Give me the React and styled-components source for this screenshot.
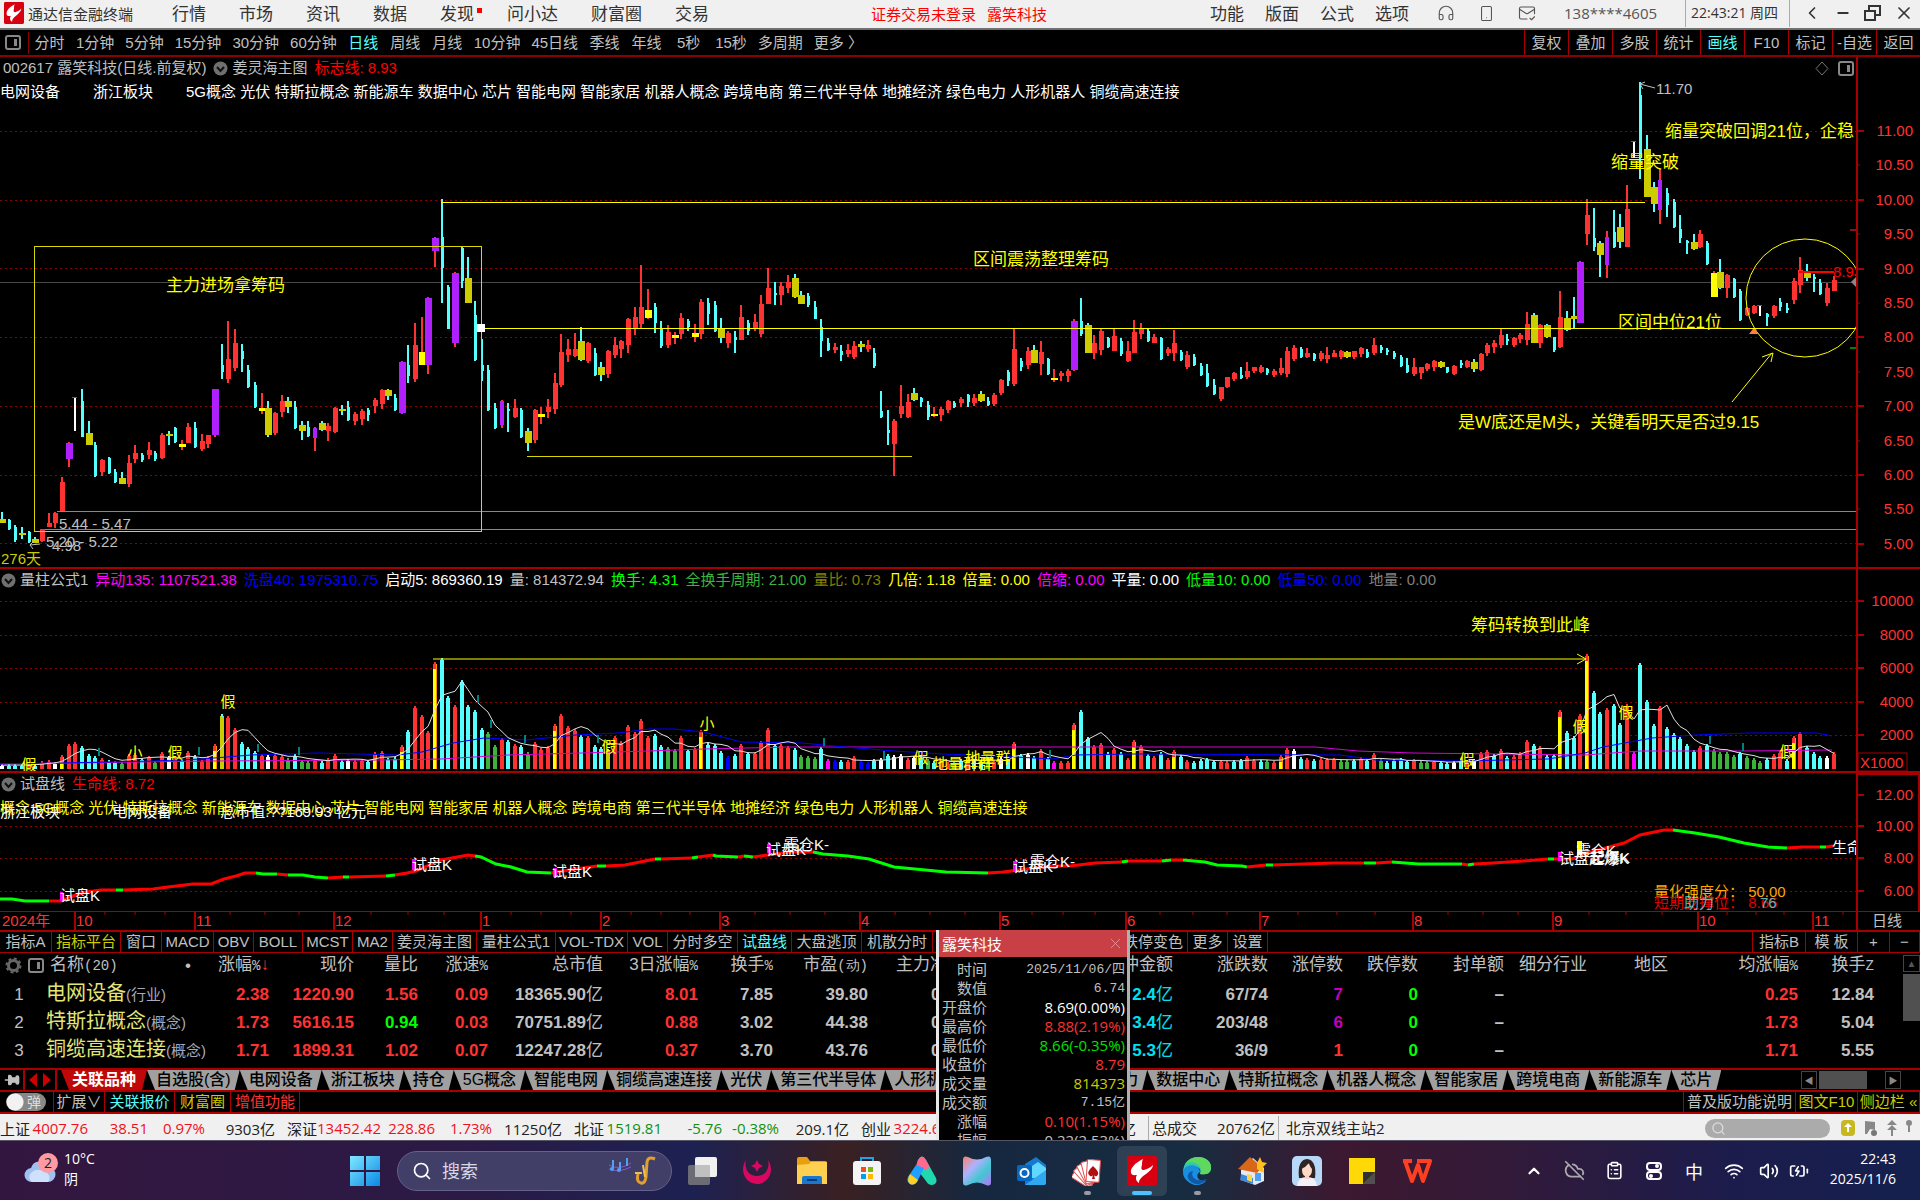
import React from 'react';
import styled, { createGlobalStyle } from 'styled-components';
import {
  Headphones,
  Smartphone,
  MailCheck,
  ChevronLeft,
  ChevronUp,
  Minus,
  X,
  CloudOff,
  ClipboardList,
  Wifi,
  Volume2,
  BatteryCharging,
  Search,
  Pin
} from 'lucide-react';

const RED = '#ff3232';
const LINE = '#a80000';
const CYAN = '#54ffff';
const YELLOW = '#ffff00';
const OLIVE = '#cccc00';
const PURPLE = '#b020ff';
const GREY = '#c0c0c0';
const GREEN = '#00ff00';
const MAGENTA = '#ff00ff';

const Global = createGlobalStyle`
  * { box-sizing: border-box; }
  body {
    margin: 0;
    background: #000;
    color: ${GREY};
    font-family: 'Liberation Sans', 'Noto Sans CJK SC', sans-serif;
    font-size: 15px;
    overflow-x: hidden;
  }
  button, input, table { font: inherit; color: inherit; }
  button { background: none; border: 0; padding: 0; margin: 0; white-space: nowrap; cursor: pointer; }
`;

const Page = styled.div`
  position: relative;
  display: flex;
  flex-direction: column;
`;

/* ---------- title bar ---------- */

const TitleBar = styled.header`
  display: flex;
  align-items: center;
  height: 30px;
  padding-bottom: 2px;
  background: #f0f0f0;
  color: #333;
  border-bottom: 2px solid #707070;
`;

const Brand = styled.div`
  display: flex;
  align-items: center;
  gap: 4px;
  width: 172px;
  padding-left: 4px;
`;

const Menu = styled.nav`
  display: flex;
  gap: ${p => p.$gap}px;
  padding-top: 4px;
  font-size: 17px;
`;

const MenuButton = styled.button`
  position: relative;
  line-height: 22px;
  ${p => p.$dot && `
    &:after {
      content: '';
      position: absolute;
      right: -8px;
      top: 4px;
      width: 5px;
      height: 5px;
      background: #f00;
    }
  `}
`;

const LoginState = styled.div`
  display: flex;
  gap: 11px;
  margin-left: 162px;
  color: #f00;
`;

const TitleRight = styled.div`
  display: flex;
  align-items: center;
  margin-left: auto;
`;

const TitleIcons = styled.div`
  display: flex;
  align-items: center;
  gap: 23px;
  margin: 0 28px;
  color: #555;
`;

const Phone = styled.span`
  width: 121px;
  font-family: 'Open Sans', sans-serif;
  color: #555;
`;

const Clock = styled.span`
  height: 28px;
  line-height: 28px;
  width: 105px;
  padding-left: 5px;
  white-space: nowrap;
  font-family: 'Open Sans', 'Noto Sans CJK SC', sans-serif;
  font-size: 14px;
  border-left: 1px solid #aaa;
  border-right: 1px solid #aaa;
`;

const WindowButtons = styled.div`
  display: flex;
  align-items: center;
  gap: 13px;
  padding: 0 6px 0 12px;
  button { display: flex; }
`;

/* ---------- period toolbar ---------- */

const PeriodBar = styled.nav`
  display: flex;
  align-items: center;
  height: 27px;
  border-bottom: 2px solid #8b0000;
`;

const PanelToggle = styled.button`
  display: flex;
  align-items: center;
  height: 22px;
  width: 29px;
  padding-left: 5px;
  border-right: 1px solid #8b0000;
`;

const Periods = styled.div`
  display: flex;
  gap: 11px;
  padding-left: 5px;
`;

const Period = styled.button`
  min-width: 31px;
  line-height: 22px;
  color: ${p => (p.$on ? CYAN : GREY)};
`;

const Tools = styled.div`
  display: flex;
  margin-left: auto;
`;

const Tool = styled.button`
  width: 44px;
  line-height: 25px;
  border-left: 1px solid ${LINE};
  color: ${p => (p.$on ? CYAN : GREY)};
`;

/* ---------- charts ---------- */

const ChartPanel = styled.section`
  position: relative;
  height: ${p => p.$h}px;
  overflow: hidden;
  svg.plot { display: block; width: 100%; height: 100%; }
`;

const Legend = styled.div`
  position: absolute;
  left: 0;
  top: 0;
  display: flex;
  align-items: center;
  gap: 7px;
  padding-left: ${p => p.$left || 0}px;
  line-height: 22px;
  white-space: nowrap;
`;

const LegendRow = styled(Legend)`
  top: ${p => p.$top}px;
  gap: 33px;
  color: ${p => p.$c};
`;

const LegendTitle = styled.span`
  display: flex;
  align-items: center;
  gap: 4px;
`;

const Value = styled.span`
  color: ${p => p.$c || GREY};
`;

const CornerIcons = styled.div`
  position: absolute;
  right: 66px;
  top: 4px;
  display: flex;
  gap: 9px;
`;

/* ---------- indicator tabs ---------- */

const TabRow = styled.nav`
  display: flex;
  height: 21px;
  border-bottom: 1px solid ${LINE};
`;

const IndicatorTab = styled.button`
  width: ${p => p.$w}px;
  line-height: 20px;
  text-align: ${p => (p.$end ? 'right' : 'center')};
  padding-right: ${p => (p.$end ? 4 : 0)}px;
  border-right: 1px solid ${LINE};
  color: ${p => p.$c || GREY};
  overflow: hidden;
`;

const Push = styled.div`
  margin-left: auto;
  display: flex;
  border-left: 1px solid ${LINE};
`;

/* ---------- quote table ---------- */

const Dock = styled.div`
  position: relative;
`;

const QuoteArea = styled.div`
  display: flex;
  height: 115px;
`;

const Quotes = styled.table`
  flex: 1;
  width: 100%;
  table-layout: fixed;
  border-collapse: collapse;
  height: 111px;
  th, td { padding: 0; white-space: nowrap; text-align: right; }
  th { height: 27px; line-height: 24px; font-size: 17px; font-weight: normal; vertical-align: top; }
  td { height: 28px; font-size: 17px; font-weight: bold; vertical-align: baseline; }
`;

const Half = styled.span`
  font-family: 'Liberation Mono', monospace;
  font-size: 14px;
`;

const NameHead = styled.div`
  display: flex;
  align-items: center;
  gap: 6px;
  padding-left: 5px;
  text-align: left;
  i { margin-left: auto; margin-right: 9px; font-style: normal; }
`;

const NumCell = styled.td`
  color: ${p => p.$c || GREY};
`;

const Unit = styled.span`
  font-weight: normal;
`;

const IndexCell = styled.td`
  && { text-align: center; padding-right: 8px; font-weight: normal; }
`;

const NameCell = styled.td`
  && { text-align: left; font-weight: normal; font-size: 20px; line-height: 27px; color: #e2e67a; }
  small { font-size: 15px; color: #a8a8b8; }
`;

const Scroll = styled.div`
  width: 17px;
  padding-top: 2px;
  display: flex;
  flex-direction: column;
  align-items: stretch;
  gap: 2px;
  button {
    height: 17px;
    border: 1px solid #444;
    color: #555;
    font-size: 10px;
  }
  div { height: 47px; background: #505050; }
`;

/* ---------- sheet tabs ---------- */

const Sheets = styled.nav`
  display: flex;
  align-items: center;
  height: 24px;
  border-top: 2px solid ${LINE};
  border-bottom: 2px solid ${LINE};
`;

const SheetTools = styled.div`
  display: flex;
  align-items: center;
  justify-content: center;
  gap: 5px;
  height: 20px;
  width: ${p => p.$w}px;
  border-right: 2px solid ${LINE};
`;

const SheetList = styled.div`
  display: flex;
  padding-left: 4px;
`;

const SheetTab = styled.button`
  flex: none;
  height: 20px;
  padding: 0 ${p => (p.$on ? 11 : 9)}px;
  line-height: 20px;
  font-size: 16px;
  font-weight: ${p => (p.$on ? 'bold' : '500')};
  background: ${p => (p.$on ? '#c00808' : '#a0a0a0')};
  color: ${p => (p.$on ? '#fff' : '#000')};
  clip-path: polygon(0 0, 100% 0, calc(100% - 5px) 100%, 8px 100%);
`;

const SheetScroll = styled.div`
  display: flex;
  align-items: center;
  gap: 2px;
  margin-left: auto;
  padding-right: 19px;
  button { width: 16px; height: 18px; border: 1px solid #444; font-size: 9px; color: #888; }
  i { width: 48px; height: 18px; background: #505050; margin-right: 16px; }
`;

/* ---------- function bar ---------- */

const FunctionBar = styled.nav`
  display: flex;
  height: 22px;
  border-bottom: 2px solid #b00000;
`;

const Func = styled.button`
  width: ${p => p.$w}px;
  line-height: 20px;
  border-right: 1px solid ${LINE};
  border-left: ${p => (p.$first ? `1px solid ${LINE}` : 0)};
  color: ${p => p.$c || GREY};
`;

const PopSwitch = styled.button`
  display: flex;
  align-items: center;
  justify-content: flex-end;
  width: 40px;
  height: 18px;
  margin: 1px 7px 0 6px;
  padding: 0 5px 0 0;
  border-radius: 9px;
  background: radial-gradient(circle at 9px 9px, #f2f2f2 8px, #888 9px);
  color: #ddd;
  font-size: 14px;
  line-height: 16px;
`;

/* ---------- status bar ---------- */

const StatusBar = styled.footer`
  display: flex;
  align-items: center;
  height: 26px;
  padding-top: 2px;
  background: #f0f0f0;
  color: #222;
  font-family: 'Open Sans', 'Noto Sans CJK SC', sans-serif;
  white-space: nowrap;
  overflow: hidden;
`;

const Market = styled.div`
  display: grid;
  grid-template-columns: 30px 58px 60px 57px 70px;
  width: 287px;
  flex: none;
  color: ${p => p.$c};
  span { text-align: right; }
  span:first-child { text-align: left; color: #222; }
  span:last-child { color: #222; }
`;

const StatusCell = styled.div`
  line-height: 24px;
  padding: 0 3px 0 3px;
  width: ${p => p.$w}px;
  border-left: 1px solid #aaa;
  display: flex;
  justify-content: space-between;
`;

const StatusSearch = styled.label`
  display: flex;
  align-items: center;
  margin-left: auto;
  width: 125px;
  height: 19px;
  padding-left: 6px;
  border-radius: 10px;
  background: #ababab;
  color: #ddd;
  input { width: 90px; border: 0; background: none; outline: 0; }
`;

const StatusIcons = styled.div`
  display: flex;
  align-items: center;
  width: 90px;
  padding-left: 10px;
`;

/* ---------- floating quote window ---------- */

const Float = styled.aside`
  position: absolute;
  left: 936px;
  top: -2px;
  bottom: 0;
  width: 194px;
  overflow: hidden;
  background: #000;
  border-left: 3px solid #e8e8e8;
  border-right: 3px solid #b0b0b0;
`;

const FloatTitle = styled.div`
  display: flex;
  align-items: center;
  justify-content: space-between;
  height: 27px;
  margin: 0 -3px;
  padding: 0 6px 0 6px;
  background: #c84046;
  color: #fff;
  button { display: flex; color: #eaa; }
`;

const FloatList = styled.dl`
  margin: 3px 0 0;
`;

const FloatRow = styled.div`
  display: flex;
  justify-content: space-between;
  height: 19px;
  line-height: 19px;
  padding: 0 2px 0 3px;
  dt { width: 45px; text-align: right; }
  dd {
    margin: 0;
    color: ${p => p.$c || GREY};
    font-family: ${p => (p.$mono ? "'Liberation Mono'" : "'Open Sans'")}, 'Noto Sans CJK SC', sans-serif;
    font-size: ${p => (p.$mono ? 13 : 15)}px;
  }
`;

/* ---------- taskbar ---------- */

const Taskbar = styled.footer`
  display: grid;
  grid-template-columns: 350px auto 1fr;
  align-items: center;
  height: 60px;
  border-top: 1px solid #556;
  background: linear-gradient(90deg, #33163f 0%, #2b1a45 24%, #1d2152 36%, #3a2022 44%, #152840 51%, #182c40 62%, #3d1830 70%, #331a38 78%, #1c1c4c 90%, #14204e 100%);
  color: #fff;
  font-family: 'Open Sans', 'Noto Sans CJK SC', sans-serif;
`;

const Weather = styled.button`
  display: flex;
  align-items: center;
  gap: 5px;
  padding-left: 24px;
  padding-bottom: 4px;
  text-align: left;
  font-size: 14px;
  line-height: 20px;
`;

const Apps = styled.div`
  display: flex;
  align-items: center;
  gap: 5px;
`;

const TaskSearch = styled.label`
  display: flex;
  align-items: center;
  width: 275px;
  height: 40px;
  margin: 0 0 0 12px;
  padding: 0 14px;
  border-radius: 20px;
  border: 1px solid #66608a;
  background: #413f68;
  input {
    flex: 1;
    min-width: 0;
    margin-left: 8px;
    border: 0;
    outline: 0;
    background: none;
    font-size: 18px;
  }
  input::placeholder { color: #d8d8e4; opacity: 1; }
`;

const AppButton = styled.button`
  position: relative;
  display: flex;
  align-items: center;
  justify-content: center;
  width: 50px;
  height: 50px;
  border-radius: 6px;
  background: ${p => (p.$mark === 'on' ? 'rgba(255,255,255,0.1)' : 'none')};
  ${p => p.$mark && `
    &:after {
      content: '';
      position: absolute;
      bottom: 1px;
      width: ${p.$mark === 'on' ? 20 : 7}px;
      height: 4px;
      border-radius: 2px;
      background: ${p.$mark === 'on' ? '#4cc2ff' : '#9a9aa4'};
    }
  `}
`;

const StartButton = styled.button`
  display: flex;
`;

const Tray = styled.div`
  display: flex;
  align-items: center;
  justify-content: flex-end;
  padding-right: 24px;
  button { display: flex; justify-content: center; width: 40px; font-size: 18px; }
  button.tight { width: 30px; }
`;

const TrayClock = styled.div`
  width: 82px;
  padding-bottom: 3px;
  text-align: right;
  font-size: 14px;
  line-height: 20px;
`;

/* ---------- data ---------- */

const STEP = 6.66;
const xOf = i => Math.round(2 + STEP * i);

// kind high low open/close, in thirds of a pixel under each base
const CANDLES = [
  {
    base: 180,
    rows: `o 996 1030 1018 1028|c 1018 1050 1020 1048|c 1036 1085 1040 1080|o 1040 1076 1058 1062|c 1054 1088 1056 1086|o 1072 1090 1078 1090|r 1046 1086 1046 1084|r 1000 1040 1030 1040|r 996 1044 998 1030|r 890 992 906 992|p 786 860 788 836|w 652 754 652 754|c 628 770 662 770|o 722 796 760 796|c 786 890 796 888|r 838 888 840 876|c 830 882 834 880|c 868 908 876 906|o 876 912 894 912|r 824 920 850 912|r 794 848 820 838|c 820 846 824 840|r 786 838 810 826|c 814 842 818 838|r 760 836 766 834|o 752 796 762 768|c 740 790 745 785|y 780 810 792 800|r 730 790 742 788|c 726 804 745 800|r 762 812 782 808|r 764 804 764 792|p 626 772 628 766|c 492 598 555 575|r 422 608 538 598|r 448 574 488 564|c 492 576 514 536|c 556 624 570 620|c 606 684 615 682|y 640 702 684 694|o 662 770 684 766|r 696 764 698 760|r 644 712 662 696|o 650 700 662 682|c 664 748 680 744|o 722 780 734 754|c 724 770 740 768|q 740 812 744 774|o 722 752 730 750|r 730 782 738 752|r 680 760 684 756|o 674 706 686 692|c 664 722 680 720|r 696 736 702 724|r 688 734 692 718|c 684 722 690 706|r 654 698 660 678|r 628 686 630 672|o 628 660 630 648|c 642 692 655 690|p 542 702 546 700|c 496 608 555 588|r 430 606 496 598|y 410 556 516 554|p 350 582 354 554|p 170 260 174 214|c 58 370 170 265|c 316 448 322 446|p 276 500 280 488|c 198 324 205 302|o 230 368 294 368|c 364 542 405 540|c 476 602 556 572|c 556 692 570 690|c 670 748 685 745|q 660 744 664 736|c 670 756 688 694|r 656 714 684 712|c 684 774 690 772|o 744 812 754 788|r 688 790 690 780|y 680 732 702 712|r 658 714 680 696|r 578 702 610 688|r 462 620 516 616|r 476 546 508 526|r 458 530 508 528|o 440 542 482 540|r 486 550 488 542|c 504 588 520 585|o 546 602 560 584|r 510 594 514 582|r 470 534 496 524|r 480 534 482 506|r 414 518 416 494`
  },
  {
    base: 240,
    rows: `r 200 284 230 266|r 76 266 200 252|y 148 238 210 234|c 188 280 200 250|c 244 324 265 318|r 256 324 276 316|y 275 312 285 293|r 220 298 234 282|c 236 274 242 262|y 252 306 280 290|r 178 298 186 282|c 174 254 190 222|c 184 276 195 272|o 234 308 266 294|r 272 324 278 308|c 272 340 290 300|r 196 300 230 300|c 240 284 248 274|r 222 274 246 268|r 166 290 192 282|r 84 192 144 192|c 126 196 158 164|r 126 196 138 164|r 106 160 126 144|o 102 174 114 172|o 154 192 166 192|c 158 200 168 196|c 184 238 202 236|c 238 350 262 302|c 294 334 308 330|r 308 340 320 330|c 314 362 334 344|r 312 350 330 342|r 304 358 318 350|o 304 336 312 322|r 300 336 316 328|c 324 384 340 378|c 454 534 512 532|c 510 614 570 578|r 536 708 542 612|r 436 534 498 522|r 462 534 486 532|o 444 482 460 480|c 470 500 474 486|c 484 540 496 532|y 500 532 521 526|r 502 542 506 526|r 480 518 484 510|c 484 504 488 500|r 470 500 478 488|c 462 500 466 486|r 462 498 474 488|o 454 486 462 484|c 470 498 484 494|r 458 498 464 492|r 416 466 420 458|c 390 438 396 422|r 266 438 328 432|c 354 392 362 382|r 320 388 332 374|o 316 370 330 368|r 302 404 336 372|c 354 406 358 402|y 388 426 413 418|r 394 424 400 408|r 386 426 394 408|p 236 392 242 390|c 174 288 242 282|o 248 340 254 338|r 286 358 310 338|r 266 344 272 330|c 290 324 294 320|r 266 332 288 332|c 294 348 304 342|r 304 366 332 362|r 240 340 276 338`
  },
  {
    base: 260,
    rows: `r 188 238 206 222|c 206 246 212 244|r 222 250 230 248|c 230 300 234 296|r 260 288 266 280|r 210 302 250 280|c 270 302 276 300|r 274 328 284 320|c 282 318 290 314|c 308 348 318 344|c 312 382 340 378|c 356 404 376 402|r 380 424 382 416|r 350 384 352 382|r 336 364 340 356|c 320 358 345 354|r 306 358 334 352|r 320 340 322 334|r 316 340 320 336|c 324 344 326 338|r 328 350 332 346|r 294 346 324 338|r 260 350 272 342|r 256 304 264 296|c 260 294 268 290|r 264 294 280 292|c 278 302 282 296|r 272 302 280 296|r 260 308 286 296|r 270 290 280 290|r 270 298 274 290|o 272 294 276 290|r 272 298 274 292|r 260 290 264 282|c 268 294 276 290|r 234 284 254 280|c 256 280 260 270|c 264 284 270 276|c 274 298 280 290|c 286 320 290 318|c 294 340 315 336|r 294 348 322 342|r 320 358 322 338|r 308 332 312 328|r 300 332 304 322|o 302 324 306 322|c 320 340 322 336|r 316 344 318 342|c 300 324 310 316|r 300 324 304 320|o 296 336 306 328|r 280 332 282 330|r 248 288 254 280|r 240 280 248 262|r 206 264 226 256|c 222 256 236 242|r 230 262 234 256|r 218 250 226 238|r 156 256 192 240|o 158 250 164 248|r 192 264 194 248|o 192 234 194 230|c 230 276 232 270|r 94 264 170 260|o 154 212 174 210|o 110 206 168 178|p 2 190 6 188`
  },
  {
    base: 70,
    rows: `r 388 524 436 492|c 414 544 504 532|o 514 620 518 556|q 484 624 500 584|c 420 534 486 532|o 432 534 470 516|r 346 530 418 530|w 214 264 214 264|c 36 328 76 260|o 196 380 238 380|o 336 426 350 402|q 296 462 330 420|c 354 440 370 404|c 388 474 396 470|c 436 518 478 504|c 510 552 514 520|o 492 540 516 538|r 480 534 492 532|c 514 586 520 582|y 602 680 608 680|o 568 658 606 654|r 612 684 616 654|c 624 684 628 680|c 656 752 664 750|r 710 738 714 734|r 706 732 708 730|w 706 738 716 730|c 728 768 732 740|r 706 744 708 738|c 684 722 696 710|c 698 728 714 720|r 624 702 632 690|r 560 668 600 646|o 582 632 604 624|c 612 666 620 628|c 628 676 640 672|r 638 708 654 700|r 618 664 630 662`
  }
].flatMap(({ base, rows }) =>
  rows.split('|').map(row => {
    const [kind, ...n] = row.split(' ');
    const [hi, lo, top, bot] = n.map(v => Math.round(base + v / 3));
    return { kind, hi, lo, top, bot };
  })
);

const VOLUMES = `w616 c614 c616 c615 y612 c614 r606 r604 w608 y588 r556 r548 c562 c584 c592 r596 c602 c606 g608 r584 r582 c596 r592 g606 r578 w590 r598 c600 r576 c588 r604 r590 y556 o464 r472 r506 c548 c564 c576 r586 w588 r586 r588 g596 c586 g602 g606 r600 c606 r596 r586 c602 w600 r602 r600 c604 y578 r576 c598 c594 y558 c512 r442 r468 r516 y308 c298 c410 r438 c362 c438 c454 c508 g520 g558 r536 c542 r556 c558 g580 r550 r566 r562 y495 r464 r502 r510 c528 r530 c558 c565 o570 r530 r545 r498 r520 r480 r530 c524 c558 g564 g570 r532 c570 r568 y514 c552 c556 c576 b592 c586 r556 c580 r580 r546 r506 c556 r556 r562 c568 g588 g592 g594 c564 m600 b604 c602 r602 r592 b604 b608 c600 w598 c584 w588 w584 r596 w590 c592 g600 c606 r604 r608 g606 c600 r590 c600 c606 g604 r602 w594 c600 y548 c584 w582 c590 r570 c594 m606 r606 r606 y492 c452 c534 r558 r552 c580 r568 c580 r596 y542 r558 c584 r592 c578 r596 y572 c588 r602 c606 c600 c598 c602 r604 r606 c602 c600 r592 r600 c602 g604 r606 y588 r568 w570 c594 r598 c600 r598 r598 r596 g602 g602 c600 r594 c600 r582 g600 c606 c600 c598 c602 r600 g606 g606 r604 c606 c610 w606 c600 y606 w600 r580 r572 c584 r570 c592 r588 r580 r542 c556 r562 c588 c584 y454 c516 c530 r466 y284 c396 c458 r446 c434 c492 r434 m578 c312 c422 c496 r442 c504 c522 c534 c556 c572 r562 c556 g570 g580 g578 g588 c580 g592 g596 g606 c598 r584 r576 c600 y532 r520 c562 c580 c590 w590 r580`
  .split(' ')
  .map(v => ({ kind: v[0], y: 560 + Number(v.slice(1)) / 3 }));

const VOL_BASE = 769;
const VOL_COLORS = {
  r: RED,
  c: CYAN,
  w: '#fff',
  g: '#3cb43c',
  y: YELLOW,
  o: OLIVE,
  b: '#0000ff',
  m: MAGENTA
};

const ma5 = VOLUMES.map((v, i) => {
  const win = VOLUMES.slice(Math.max(0, i - 4), i + 1);
  const avg = win.reduce((s, w) => s + w.y, 0) / win.length;
  return `${xOf(i)},${avg.toFixed(1)}`;
}).join(' ');

const MA40 =
  '0,764 61,763 153,761 202,759 251,755 318,753 398,755 422,752 453,743 484,738 527,740 576,735 618,733 649,729 674,729 704,732 741,742 802,743 845,747 894,751 943,754 997,756 1052,759 1076,755 1131,754 1340,755 1376,760 1462,761 1548,759 1585,753 1603,747 1652,738 1695,735 1750,733 1817,733 1832,736';
const MA135 =
  '0,764 208,761 380,760 441,759 508,755 582,753 649,751 704,749 790,747 1315,747 1358,751 1413,753 1585,755 1640,751 1744,751 1832,750';

const TURNS = [
  [99, 748], [199, 747], [258, 744], [299, 747], [478, 695], [491, 720], [525, 735],
  [598, 735], [824, 738], [884, 751], [1050, 750], [1710, 736], [1743, 743]
];

const LIFE = [
  ['g', '0,899 12,899 25,901 49,901'],
  ['r', '49,901 61,901 70,897 86,892 101,890 116,890'],
  ['g', '116,890 123,890'],
  ['r', '123,890 153,889 168,887 193,884 211,884 224,879 236,876 245,873 256,873'],
  ['g', '256,873 263,874 277,874'],
  ['r', '277,874 288,875'],
  ['g', '288,875 303,875 315,877 328,878'],
  ['r', '328,878 343,877'],
  ['g', '343,877 349,877'],
  ['r', '349,877 386,876'],
  ['g', '386,876 395,875'],
  ['r', '395,875 407,873 416,871 429,865 441,860 468,855 475,856'],
  ['g', '475,856 481,857 496,864 511,867 527,872 551,873'],
  ['r', '551,873 569,870 597,866'],
  ['g', '597,866 606,866'],
  ['r', '606,866 625,865 655,859'],
  ['g', '655,859 661,859'],
  ['r', '661,859 692,858'],
  ['g', '692,858 698,857'],
  ['r', '698,857 713,855'],
  ['g', '713,855 716,856 738,857'],
  ['r', '738,857 744,856'],
  ['g', '744,856 753,857'],
  ['r', '753,857 768,855 790,852 813,852'],
  ['g', '813,852 823,854 848,856 869,859 894,867 915,869 946,872 988,873'],
  ['r', '988,873 1003,872 1027,869 1052,866 1070,866 1095,863 1122,862'],
  ['g', '1122,862 1128,861'],
  ['r', '1128,861 1162,861'],
  ['g', '1162,861 1171,860'],
  ['r', '1171,860 1183,860'],
  ['g', '1183,860 1205,862 1217,865 1242,866 1247,867'],
  ['r', '1247,867 1266,865'],
  ['g', '1266,865 1273,865'],
  ['r', '1273,865 1333,863 1364,863'],
  ['g', '1364,863 1376,863'],
  ['r', '1376,863 1392,862'],
  ['g', '1392,862 1419,864 1462,864'],
  ['r', '1462,864 1468,865'],
  ['g', '1468,865 1474,864'],
  ['r', '1474,864 1493,863 1523,861 1548,859'],
  ['g', '1548,859 1554,859'],
  ['r', '1554,859 1572,859 1591,852 1624,843 1640,835 1664,830 1673,830'],
  ['g', '1673,830 1695,833 1719,837 1744,843 1768,847 1787,848'],
  ['r', '1787,848 1802,847 1820,847'],
  ['g', '1820,847 1826,847'],
  ['r', '1826,847 1833,846']
];

const MONTHS = [
  ['10', 75], ['11', 195], ['12', 334], ['1', 481], ['2', 601], ['3', 720], ['4', 860],
  ['5', 1000], ['6', 1126], ['7', 1260], ['8', 1413], ['9', 1553], ['10', 1698], ['11', 1813]
];

const CONCEPTS =
  '5G概念 光伏 特斯拉概念 新能源车 数据中心 芯片 智能电网 智能家居 机器人概念 跨境电商 第三代半导体 地摊经济 绿色电力 人形机器人 铜缆高速连接';

const PERIODS = ['分时', '1分钟', '5分钟', '15分钟', '30分钟', '60分钟', '日线', '周线', '月线', '10分钟', '45日线', '季线', '年线', '5秒', '15秒', '多周期', '更多 〉'];
const TOOLS = ['复权', '叠加', '多股', '统计', '画线', 'F10', '标记', '-自选', '返回'];

const VOL_LEGEND = [
  ['异动135: 1107521.38', MAGENTA],
  ['洗盘40: 1975310.75', '#0000ff'],
  ['启动5: 869360.19', '#fff'],
  ['量: 814372.94', GREY],
  ['换手: 4.31', GREEN],
  ['全换手周期: 21.00', '#3cb43c'],
  ['量比: 0.73', '#808000'],
  ['几倍: 1.18', YELLOW],
  ['倍量: 0.00', YELLOW],
  ['倍缩: 0.00', MAGENTA],
  ['平量: 0.00', '#fff'],
  ['低量10: 0.00', GREEN],
  ['低量50: 0.00', '#0000ff'],
  ['地量: 0.00', '#808080']
];

const INDICATORS = [
  ['指标A', 52], ['指标平台', 69, OLIVE], ['窗口', 41], ['MACD', 52], ['OBV', 40], ['BOLL', 49],
  ['MCST', 50], ['MA2', 40], ['姜灵海主图', 84], ['量柱公式1', 79], ['VOL-TDX', 72], ['VOL', 40],
  ['分时多空', 70], ['试盘线', 54, CYAN], ['大盘逃顶', 70], ['机散分时', 71]
];

const COLUMNS = [
  ['涨幅', 69, '%'], ['现价', 85], ['量比', 64], ['涨速', 70, '%'], ['总市值', 115], ['3日涨幅', 95, '%'],
  ['换手', 75, '%'], ['市盈', 95, '(动)'], ['主力净额', 96], ['冲金额', 209], ['涨跌数', 95], ['涨停数', 75],
  ['跌停数', 75], ['封单额', 86], ['细分行业', 83], ['地区', 81], ['均涨幅', 130, '%'], ['换手', 76, 'Z']
];

const W = undefined;
const VIOLET = '#c000c0';
const TEAL = '#00e0f0';
const ROWS = [
  ['电网设备', '行业', [['2.38', RED], ['1220.90', RED], ['1.56', RED], ['0.09', RED], ['18365.90', W, '亿'], ['8.01', RED], ['7.85', W], ['39.80', W], ['0.00', W], ['2.4', TEAL, '亿'], ['67/74', W], ['7', VIOLET], ['0', GREEN], ['–', W], [''], [''], ['0.25', RED], ['12.84', W]]],
  ['特斯拉概念', '概念', [['1.73', RED], ['5616.15', RED], ['0.94', GREEN], ['0.03', RED], ['70751.89', W, '亿'], ['0.88', RED], ['3.02', W], ['44.38', W], ['0.00', W], ['3.4', TEAL, '亿'], ['203/48', W], ['6', VIOLET], ['0', GREEN], ['–', W], [''], [''], ['1.73', RED], ['5.04', W]]],
  ['铜缆高速连接', '概念', [['1.71', RED], ['1899.31', RED], ['1.02', RED], ['0.07', RED], ['12247.28', W, '亿'], ['0.37', RED], ['3.70', W], ['43.76', W], ['0.00', W], ['5.3', TEAL, '亿'], ['36/9', W], ['1', RED], ['0', GREEN], ['–', W], [''], [''], ['1.71', RED], ['5.55', W]]]
];

const SHEETS = ['关联品种', '自选股(含)', '电网设备', '浙江板块', '持仓', '5G概念', '智能电网', '铜缆高速连接', '光伏', '第三代半导体', '人形机器人', '地摊经济', '绿色电力', '数据中心', '特斯拉概念', '机器人概念', '智能家居', '跨境电商', '新能源车', '芯片'];

const MARKETS = [
  ['上证', '4007.76', '38.51', '0.97%', '9303亿', '#f01020'],
  ['深证', '13452.42', '228.86', '1.73%', '11250亿', '#f01020'],
  ['北证', '1519.81', '-5.76', '-0.38%', '209.1亿', '#109010'],
  ['创业', '3224.62', '', '', '5233亿', '#f01020']
];

const FLOAT_ROWS = [
  ['时间', '2025/11/06/四', GREY, true],
  ['数值', '6.74', GREY, true],
  ['开盘价', '8.69(0.00%)', '#fff'],
  ['最高价', '8.88(2.19%)', RED],
  ['最低价', '8.66(-0.35%)', '#00e000'],
  ['收盘价', '8.79', RED],
  ['成交量', '814373', OLIVE],
  ['成交额', '7.15亿', GREY, true],
  ['涨幅', '0.10(1.15%)', RED],
  ['振幅', '0.22(2.53%)', GREY]
];

/* ---------- chart pieces ---------- */

const WICK = { r: RED, c: CYAN, p: RED, q: RED, o: CYAN, y: RED, w: '#fff' };
const BODY = { r: RED, c: CYAN, p: PURPLE, q: PURPLE, o: OLIVE, y: YELLOW, w: '#fff' };
const BODY_W = { r: 5, c: 3, p: 7, q: 4, o: 7, y: 7, w: 2 };

const Candle = ({ i, kind, hi, lo, top, bot }) => {
  const x = xOf(i);
  const w = BODY_W[kind];
  const left = kind === 'c' ? x - 1 : x - Math.floor(w / 2);
  return (
    <g>
      <rect x={x - 1} y={hi} width={2} height={Math.max(1, lo - hi)} fill={WICK[kind]} />
      <rect x={left} y={top} width={w} height={Math.max(2, bot - top)} fill={BODY[kind]} />
      {kind === 'w' && <rect x={x - 3} y={hi} width={5} height={1} fill={PURPLE} />}
    </g>
  );
};

const VolumeBar = ({ i, kind, y }) => {
  const x = xOf(i);
  const top = Math.round(y);
  const cap = kind === 'y' ? RED : kind === 'o' ? CYAN : VOL_COLORS[kind];
  return (
    <g>
      <rect x={x - 2} y={top + 1} width={4} height={VOL_BASE - top - 1} fill={VOL_COLORS[kind]} />
      <rect x={x - 1} y={top - 1} width={2} height={3} fill={cap} />
      {kind === 'y' && <rect x={x - 2} y={top + 1} width={4} height={5} fill={RED} />}
      {kind === 'y' && <rect x={x + 1} y={top + 1} width={1} height={VOL_BASE - top - 1} fill="#ff9000" />}
    </g>
  );
};

const Grid = ({ ys }) =>
  ys.map(y => (
    <line key={y} x1={0} x2={1856} y1={y} y2={y} stroke="#8c0000" strokeDasharray="2 3" shapeRendering="crispEdges" />
  ));

const Axis = ({ top, bottom, ticks, at = 1913 }) => (
  <g>
    <line x1={1857} x2={1857} y1={top} y2={bottom} stroke={LINE} strokeWidth={2} />
    {ticks.map(([label, y, minor]) => (
      <g key={label}>
        <line x1={1857} x2={minor ? 1860 : 1864} y1={y} y2={y} stroke={LINE} strokeWidth={minor ? 1 : 2} />
        <text x={at} y={y + 5} textAnchor="end" fill={RED}>{label}</text>
      </g>
    ))}
  </g>
);

const priceTicks = Array.from({ length: 13 }, (_, k) => {
  const p = 11 - k * 0.5;
  return [p.toFixed(2), Math.round(131 + 34.4 * k), k % 2 === 1];
});

const PriceChart = () => (
  <svg className="plot" viewBox="0 57 1920 512" preserveAspectRatio="xMaxYMid slice" fontSize="15">
    <defs>
      <clipPath id="price"><rect x="0" y="57" width="1856" height="512" /></clipPath>
    </defs>
    <Grid ys={[131, 200, 268, 337, 406, 475, 543]} />
    <g clipPath="url(#price)">
      <g stroke="#606060" shapeRendering="crispEdges">
        <line x1="0" x2="1856" y1="282" y2="282" stroke="#484848" />
        <line x1="57" x2="1856" y1="511" y2="511" stroke="#888" />
        <line x1="44" x2="1856" y1="529" y2="529" stroke="#888" />
      </g>
      <g shapeRendering="crispEdges">
        {CANDLES.map((c, i) => <Candle key={i} i={i} {...c} />)}
      </g>
      <g fill="none" stroke={YELLOW}>
        <rect x="34" y="246" width="447" height="285" stroke="#d8d800" shapeRendering="crispEdges" />
        <path d="M441 202H1645M481 328H1856" shapeRendering="crispEdges" />
        <path d="M527 456H912" stroke="#d8d800" shapeRendering="crispEdges" />
        <circle cx="1805" cy="298" r="59" />
        <path d="M1732 402L1772 353M1762 357L1773 353L1771 362" />
      </g>
      <rect x="477" y="324" width="8" height="8" fill="#fff" />
      <path d="M1749 334L1753 329H1756L1758 334Z" fill="#ff8040" />
      <path d="M1799 272H1834" stroke="#f00" strokeWidth="2" />
      <text x="1833" y="277" fill="#f00">8.93</text>
      <path d="M1856 277V287L1851 282Z" fill="#888" />
      <path d="M1850 230H1856" stroke={RED} />
      <path d="M1850 348H1856" stroke={GREEN} />
      <path d="M1640 84L1655 88M1640 84L1645 82M1640 84L1643 89" stroke={GREY} fill="none" />
      <path d="M30 545L40 544M30 545L34 541M30 545L33 549" stroke={GREY} fill="none" />
      <g fill={GREY}>
        <text x="1656" y="94">11.70</text>
        <text x="59" y="529">5.44 - 5.47</text>
        <text x="46" y="547">5.20 - 5.22</text>
        <text x="52" y="551">4.98</text>
      </g>
      <g fill={YELLOW} fontSize="17">
        <text x="166" y="291">主力进场拿筹码</text>
        <text x="973" y="265">区间震荡整理筹码</text>
        <text x="1665" y="137">缩量突破回调21位，企稳</text>
        <text x="1611" y="168">缩量突破</text>
        <text x="1618" y="328">区间中位21位</text>
        <text x="1458" y="428">是W底还是M头，关键看明天是否过9.15</text>
      </g>
      <text x="1" y="564" fill={OLIVE}>276天</text>
    </g>
    <Axis top={57} bottom={569} ticks={priceTicks} />
    <line x1="0" x2="1920" y1="568" y2="568" stroke={LINE} strokeWidth="2" />
  </svg>
);

const VolumeChart = () => (
  <svg className="plot" viewBox="0 569 1920 204" preserveAspectRatio="xMaxYMid slice" fontSize="15">
    <Grid ys={[601, 635, 668, 702, 735]} />
    <g shapeRendering="crispEdges">
      {VOLUMES.map((v, i) => <VolumeBar key={i} i={i} {...v} />)}
    </g>
    <g fill="none">
      <polyline points={MA135} stroke="#d800d8" />
      <polyline points={MA40} stroke="#0000ff" />
      <polyline points={ma5} stroke="#e0e0e0" />
      {TURNS.map(([x, y]) => <path key={x} d={`M${x} ${y}v8`} stroke="#008080" strokeWidth="2" />)}
      <path d="M433 659H1586M1577 654L1586 659L1577 664" stroke={YELLOW} />
    </g>
    <g fill={YELLOW} textAnchor="middle">
      {[[29, 770], [175, 758], [228, 707], [609, 752], [921, 763], [1467, 765], [1580, 732], [1626, 718], [1787, 757]].map(([x, y]) => (
        <text key={x} x={x} y={y}>假</text>
      ))}
      <text x="135" y="758">小</text>
      <text x="707" y="729">小</text>
      <text x="963" y="769">地量群群</text>
      <text x="988" y="763">地量群</text>
    </g>
    <text x="1471" y="631" fill={YELLOW} fontSize="17">筹码转换到此峰</text>
    <Axis top={569} bottom={773} ticks={[['10000', 601], ['8000', 635], ['6000', 668], ['4000', 702], ['2000', 735]]} />
    <rect x="1858" y="753" width="49" height="18" fill="none" stroke={LINE} />
    <text x="1860" y="768" fill={RED}>X1000</text>
    <line x1="0" x2="1920" y1="772" y2="772" stroke={LINE} strokeWidth="2" />
  </svg>
);

const SIGNALS = [
  [60, 901, '试盘K'], [412, 870, '试盘K'], [552, 877, '试盘K'], [766, 855, '试盘K-'], [784, 850, '震仓K-'],
  [1013, 872, '试盘K-'], [1030, 867, '震仓K-'], [1559, 864, '试盘起爆K'], [1576, 856, '震仓K'], [1590, 863, '起爆K']
];

const TrendChart = () => (
  <svg className="plot" viewBox="0 773 1920 138" preserveAspectRatio="xMaxYMid slice" fontSize="15">
    <defs>
      <clipPath id="trend"><rect x="0" y="773" width="1856" height="138" /></clipPath>
    </defs>
    <Grid ys={[826, 858, 891]} />
    <g clipPath="url(#trend)">
      {LIFE.map(([c, pts]) => (
        <polyline key={pts} points={pts} fill="none" stroke={c === 'g' ? GREEN : '#f00'} strokeWidth="3" />
      ))}
      <g fill={MAGENTA}>
        <rect x="60" y="892" width="3" height="9" />
        <rect x="412" y="859" width="4" height="11" />
        <rect x="553" y="868" width="4" height="9" />
        <rect x="767" y="844" width="4" height="9" />
        <rect x="1013" y="861" width="4" height="11" />
        <rect x="1558" y="852" width="4" height="9" />
      </g>
      <rect x="1577" y="841" width="5" height="14" fill={YELLOW} />
      <g fill="#fff">
        {SIGNALS.map(([x, y, t]) => <text key={x} x={x} y={y}>{t}</text>)}
        <text x="1832" y="853">生命线</text>
      </g>
      <text x="1654" y="897" fill="#ffa500">量化强度分： 50.00</text>
      <text x="1654" y="908" fill="#e00000">短期支撑位： 8.65</text>
      <text x="1684" y="908" fill={CYAN} opacity="0.7">助力</text>
      <text x="1760" y="908" fill={CYAN} opacity="0.7">76</text>
    </g>
    <Axis top={773} bottom={911} ticks={[['12.00', 795], ['10.00', 826], ['8.00', 858], ['6.00', 891]]} />
    <path d="M1858 774H1919V911" fill="none" stroke={LINE} strokeWidth="2" />
  </svg>
);

const TimeAxis = () => (
  <svg className="plot" viewBox="0 911 1920 21" preserveAspectRatio="xMaxYMid slice" fontSize="15" fill={RED}>
    <path d="M0 911H1920M0 931H1920" stroke={LINE} strokeWidth="2" />
    <text x="2" y="926">2024年</text>
    {MONTHS.map(([m, x], i) => {
      const next = i < MONTHS.length - 1 ? MONTHS[i + 1][1] : x + 120;
      return (
        <g key={x}>
          <path d={`M${x} 912V930`} stroke={LINE} strokeWidth="2" />
          {[1, 2, 3].map(k => {
            const tx = Math.round(x + ((next - x) * k) / 4);
            return tx < 1856 && <path key={k} d={`M${tx} 912v3`} stroke={LINE} />;
          })}
          <text x={x + 1} y="926">{m}</text>
        </g>
      );
    })}
    <path d="M1857 912V930" stroke={LINE} strokeWidth="2" />
    <text x="1872" y="926" fill={GREY}>日线</text>
  </svg>
);

/* ---------- drawings ---------- */

const Logo = ({ w = 20, h = 22 }) => (
  <svg width={w} height={h} viewBox="0 0 30 30" preserveAspectRatio="none">
    <rect width="30" height="30" rx="2" fill="#d80010" />
    <path d="M16 3C8 7 3 12 4 17c1 3 4 2 6 2-2 3-1 6 2 8 0-4 3-6 7-9 4-3 7-6 7-9-3 3-6 4-9 5-3 0-3-2-2-5 0-2 0-4 1-6z" fill="#fff" />
  </svg>
);

const Sidebar = () => (
  <svg width="16" height="15" viewBox="0 0 16 15" fill="none" stroke="#888">
    <rect x="1" y="1" width="14" height="13" rx="2" strokeWidth="2" />
    <rect x="9" y="4" width="3" height="7" fill="#888" stroke="none" />
  </svg>
);

const Fold = () => (
  <svg width="15" height="15" viewBox="0 0 15 15">
    <circle cx="7.5" cy="7.5" r="7" fill="#707070" />
    <path d="M4 6l3.5 4L11 6" fill="none" stroke="#111" strokeWidth="2" />
  </svg>
);

const Gear = () => (
  <svg width="17" height="17" viewBox="0 0 17 17">
    <circle cx="8.500" cy="8.500" r="5" fill="none" stroke="#666" strokeWidth="3" />
    <circle cx="8.500" cy="8.500" r="7" fill="none" stroke="#666" strokeWidth="2" strokeDasharray="3 2.500" />
  </svg>
);

const Icon30 = ({ children }) => (
  <svg width="30" height="30" viewBox="0 0 30 30">{children}</svg>
);

const WeatherIcon = () => (
  <svg width="35" height="32" viewBox="0 0 35 32">
    <path d="M8 29a7 7 0 0 1-1-14 9 9 0 0 1 17-1 7 7 0 0 1 0 15z" fill="#9fc0f0" />
    <path d="M8 29a6 6 0 0 1 0-10 9 9 0 0 1 12 0 6 6 0 0 1 4 10z" fill="#cfe0fb" />
    <circle cx="24" cy="10" r="10" fill="#ff9aa2" />
    <text x="24" y="15" fontSize="14" textAnchor="middle" fill="#222">2</text>
  </svg>
);

const APPS = [
  ['任务视图', null, (
    <Icon30>
      <rect x="8" y="1" width="22" height="20" rx="2" fill="#f0f0f0" />
      <rect x="1" y="9" width="22" height="20" rx="2" fill="#808080" opacity="0.8" />
      <rect x="8" y="9" width="15" height="12" fill="#c0c0c0" />
    </Icon30>
  )],
  ['通讯', null, (
    <Icon30>
      <path d="M4 4C-3 14 3 28 15 28S33 14 26 4c2 8-2 16-11 16S2 12 4 4z" fill="#d80860" />
      <path d="M15 4l2 4 4 2-4 2-2 4-2-4-4-2 4-2z" fill="#d80860" />
    </Icon30>
  )],
  ['文件资源管理器', null, (
    <Icon30>
      <path d="M0 3a2 2 0 0 1 2-2h8l3 4h15a2 2 0 0 1 2 2v20H0z" fill="#e8a010" />
      <path d="M0 9l12-1 2-2h16v22H0z" fill="#ffd050" />
      <path d="M5 28v-6q0-2 2-2h16q2 0 2 2v6z" fill="#1878d0" />
      <path d="M10 24h10" stroke="#083878" strokeWidth="2" />
    </Icon30>
  )],
  ['应用商店', null, (
    <Icon30>
      <path d="M9 6V2h12v4" fill="none" stroke="#20a0e8" strokeWidth="2" />
      <rect x="1" y="5" width="28" height="24" rx="3" fill="#f4f4f4" />
      <path d="M9 11h5v5H9z" fill="#f05020" /><path d="M16 11h5v5h-5z" fill="#80b810" />
      <path d="M9 18h5v5H9z" fill="#00a0f0" /><path d="M16 18h5v5h-5z" fill="#ffb900" />
    </Icon30>
  )],
  ['助手', null, (
    <Icon30>
      <path d="M11 4q4-7 8 0l10 18q2 6-4 7-4 0-6-4L9 12z" fill="#20d8b0" />
      <path d="M11 4q4-7 8 0l4 8-11 3-3-5z" fill="#ff6890" />
      <path d="M9 9l8 3-7 14q-3 4-7 2-4-2-2-7z" fill="#20a0ff" />
      <path d="M3 18l8 6q-3 6-8 4-4-3 0-10z" fill="#ffd020" />
    </Icon30>
  )],
  ['剪映', null, (
    <Icon30>
      <defs>
        <linearGradient id="bow" x1="0" x2="1" y1="0" y2="1">
          <stop offset="0" stopColor="#ff8060" /><stop offset="0.35" stopColor="#b0b0ff" />
          <stop offset="0.65" stopColor="#40c8d0" /><stop offset="1" stopColor="#c070ff" />
        </linearGradient>
      </defs>
      <path d="M1 4q0-5 5-3 9 5 18 0 5-2 5 3v22q0 5-5 3-9-5-18 0-5 2-5-3z" fill="url(#bow)" />
    </Icon30>
  )],
  ['邮件', null, (
    <Icon30>
      <path d="M8 8L19 1l10 8v18q0 2-3 2H8z" fill="#1878d0" />
      <path d="M12 12l9-6 8 6v10H12z" fill="#60d8ff" />
      <path d="M8 29L29 14v13q0 2-3 2z" fill="#30a8f0" />
      <rect x="0" y="9" width="15" height="16" rx="2" fill="#0868c0" />
      <circle cx="7.500" cy="17" r="4" fill="none" stroke="#fff" strokeWidth="2" />
    </Icon30>
  )],
  ['纸牌', 'dot', (
    <Icon30>
      {[-58, -42, -28, -14, 4].map(a => (
        <rect key={a} x="14" y="4" width="13" height="22" rx="1" fill="#fff" stroke="#e05050" transform={`rotate(${a} 22 26)`} />
      ))}
      <path d="M21 10q8 7 4 10-2 1-3-1l1 4h-3l1-4q-1 2-3 1-5-3 3-10z" fill="#b01010" />
    </Icon30>
  )],
  ['通达信', 'on', <Logo w={30} h={30} />],
  ['浏览器', 'dot', (
    <Icon30>
      <path d="M1 17C1 6 8 1 16 1c9 0 14 6 13 12-1 5-6 6-11 5 2-5-2-8-7-7C5 12 1 14 1 17z" fill="#30c8b0" />
      <path d="M16 1c9 0 14 6 13 12-1 5-6 6-11 5 4-8-6-15-15-10Q8 1 16 1z" fill="#60d860" />
      <path d="M1 16C3 6 18 8 18 16c-5 2-3 10 6 9-4 5-12 5-16 2-5-3-7-7-7-11z" fill="#1890e0" />
      <path d="M11 15c-3 6 3 12 14 8-5 7-15 7-19-1-1-4 2-7 5-7z" fill="#1058a8" />
    </Icon30>
  )],
  ['家园', null, (
    <Icon30>
      <path d="M4 14L16 2l11 10v13l-9 4-14-5z" fill="#e8e8f4" />
      <path d="M1 13L13 1l12 10-5 6z" fill="#d86818" />
      <path d="M20 7l3-6 2 5 5 1-4 4 1 6-7-4z" fill="#ffc020" />
      <path d="M4 18l12 4v6L3 24z" fill="#4088d8" />
      <path d="M18 17h6v8h-6z" fill="#50a0f0" />
      <path d="M10 18l5 1v7l-5-2z" fill="#ffd840" />
    </Icon30>
  )],
  ['头像', null, (
    <Icon30>
      <rect width="30" height="30" rx="5" fill="#b8d8f8" />
      <path d="M7 22Q5 4 15 3q10 1 8 19z" fill="#302424" />
      <ellipse cx="15" cy="14" rx="5" ry="7" fill="#ffd8c8" />
      <path d="M9 13q5-2 8-6 1 5 4 6V8q-6-6-12 0z" fill="#302424" />
      <path d="M5 30q1-9 10-9t10 9z" fill="#f4f0f8" />
      <path d="M13 19h4v4h-4z" fill="#ffd0c0" />
    </Icon30>
  )],
  ['便签', null, (
    <Icon30>
      <path d="M2 2h26v14l-12 12H2z" fill="#ffd808" />
      <path d="M28 16v12H16z" fill="#505050" /><path d="M16 16h12L16 28z" fill="#303030" />
    </Icon30>
  )],
  ['文档', null, (
    <Icon30>
      <path d="M1 5h9M3 5l7 20 6-16 5 16 7-20H15" fill="none" stroke="#ff4020" strokeWidth="4" strokeLinejoin="round" />
    </Icon30>
  )]
];

const App = () => (
  <Page>
    <Global />
    <TitleBar>
      <Brand><Logo />通达信金融终端</Brand>
      <Menu $gap={33}>
        {['行情', '市场', '资讯', '数据', '发现', '问小达', '财富圈', '交易'].map(m => (
          <MenuButton key={m} $dot={m === '发现'}>{m}</MenuButton>
        ))}
      </Menu>
      <LoginState><span>证券交易未登录</span><span>露笑科技</span></LoginState>
      <TitleRight>
        <Menu $gap={21}>
          {['功能', '版面', '公式', '选项'].map(m => <MenuButton key={m}>{m}</MenuButton>)}
        </Menu>
        <TitleIcons>
          <Headphones size={18} strokeWidth={1.5} />
          <Smartphone size={17} strokeWidth={1.5} />
          <MailCheck size={18} strokeWidth={1.5} />
        </TitleIcons>
        <Phone>138****4605</Phone>
        <Clock>22:43:21 周四</Clock>
        <WindowButtons>
          <button aria-label="收起"><ChevronLeft size={20} /></button>
          <button aria-label="最小化"><Minus size={16} strokeWidth={3} /></button>
          <button aria-label="还原">
            <svg width="17" height="16" viewBox="0 0 17 16" fill="none" stroke="#333" strokeWidth="2">
              <path d="M5 5V1h11v9h-4" /><rect x="1" y="6" width="10" height="9" />
            </svg>
          </button>
          <button aria-label="关闭"><X size={20} /></button>
        </WindowButtons>
      </TitleRight>
    </TitleBar>

    <PeriodBar>
      <PanelToggle aria-label="侧栏"><Sidebar /></PanelToggle>
      <Periods>
        {PERIODS.map(p => <Period key={p} $on={p === '日线'}>{p}</Period>)}
      </Periods>
      <Tools>
        {TOOLS.map(t => <Tool key={t} $on={t === '画线'}>{t}</Tool>)}
      </Tools>
    </PeriodBar>

    <ChartPanel $h={512}>
      <PriceChart />
      <Legend $left={3}>
        <Value>002617 露笑科技(日线.前复权)</Value>
        <LegendTitle><Fold />姜灵海主图</LegendTitle>
        <Value $c="#f00">标志线: 8.93</Value>
      </Legend>
      <LegendRow $top={24} $c="#fff">
        <span>电网设备</span><span>浙江板块</span><span>{CONCEPTS}</span>
      </LegendRow>
      <CornerIcons>
        <svg width="14" height="15" viewBox="0 0 14 15"><path d="M7 1l6 6.500L7 14 1 7.500z" fill="none" stroke="#777" /></svg>
        <Sidebar />
      </CornerIcons>
    </ChartPanel>
    <ChartPanel $h={204}>
      <VolumeChart />
      <Legend $left={1}>
        <LegendTitle><Fold />量柱公式1</LegendTitle>
        {VOL_LEGEND.map(([t, c]) => <Value key={t} $c={c}>{t}</Value>)}
      </Legend>
    </ChartPanel>
    <ChartPanel $h={138}>
      <TrendChart />
      <Legend $left={1}>
        <LegendTitle><Fold />试盘线</LegendTitle>
        <Value $c="#f00">生命线: 8.72</Value>
      </Legend>
      <LegendRow $top={24} $c={YELLOW}><span>概念:{CONCEPTS}</span></LegendRow>
      <LegendRow $top={28} $c="#fff">
        <span>浙江板块</span><Value $c="#fff">&emsp;&nbsp;电网设备</Value><Value $c="#fff">&emsp;总市值:??169.93 亿元</Value>
      </LegendRow>
    </ChartPanel>
    <ChartPanel $h={21}><TimeAxis /></ChartPanel>

    <Dock>
      <TabRow>
        {INDICATORS.map(([t, w, c]) => <IndicatorTab key={t} $w={w} $c={c}>{t}</IndicatorTab>)}
        <IndicatorTab $w={255} $end>涨跌停变色</IndicatorTab>
        <IndicatorTab $w={40}>更多</IndicatorTab>
        <IndicatorTab $w={40}>设置</IndicatorTab>
        <Push>
          <IndicatorTab $w={53}>指标B</IndicatorTab>
          <IndicatorTab $w={52}>模 板</IndicatorTab>
          <IndicatorTab $w={32}>+</IndicatorTab>
          <IndicatorTab $w={30}>−</IndicatorTab>
        </Push>
      </TabRow>

      <QuoteArea>
        <Quotes>
          <colgroup>
            <col style={{ width: 46 }} />
            <col style={{ width: 154 }} />
            {COLUMNS.map(([t, w], i) => <col key={i} style={{ width: w }} />)}
            <col />
          </colgroup>
          <thead>
            <tr>
              <th colSpan={2}>
                <NameHead><Gear /><Sidebar /><span>名称<Half>(20)</Half></span><i>•</i></NameHead>
              </th>
              {COLUMNS.map(([t, w, suffix], i) => (
                <th key={i}>
                  {t}{suffix && <Half>{suffix}</Half>}
                  {i === 0 && <Value $c={RED}>↓</Value>}
                </th>
              ))}
              <th />
            </tr>
          </thead>
          <tbody>
            {ROWS.map(([name, kind, cells], i) => (
              <tr key={name}>
                <IndexCell>{i + 1}</IndexCell>
                <NameCell>{name}<small>({kind})</small></NameCell>
                {cells.map(([v, c, unit], k) => (
                  <NumCell key={k} $c={c}>{v}{unit && <Unit>{unit}</Unit>}</NumCell>
                ))}
                <td />
              </tr>
            ))}
          </tbody>
        </Quotes>
        <Scroll><button aria-label="向上滚动">▲</button><div /></Scroll>
      </QuoteArea>

      <Sheets>
        <SheetTools $w={25}><Pin size={16} fill="#c0c0c0" transform="rotate(90)" /></SheetTools>
        <SheetTools $w={32}>
          <svg width="24" height="14" viewBox="0 0 24 14" fill="#c00"><path d="M9 0v14L1 7zM15 0v14l8-7z" /></svg>
        </SheetTools>
        <SheetList>
          {SHEETS.map((s, i) => <SheetTab key={s} $on={i === 0}>{s}</SheetTab>)}
        </SheetList>
        <SheetScroll>
          <button aria-label="向左">◀</button><i /><button aria-label="向右">▶</button>
        </SheetScroll>
      </Sheets>

      <FunctionBar>
        <PopSwitch>弹</PopSwitch>
        <Func $w={52} $first>扩展∨</Func>
        <Func $w={70} $c={CYAN}>关联报价</Func>
        <Func $w={56} $c={OLIVE}>财富圈</Func>
        <Func $w={69} $c={RED}>增值功能</Func>
        <Push>
          <Func $w={112}>普及版功能说明</Func>
          <Func $w={62} $c={OLIVE}>图文F10</Func>
          <Func $w={62} $c={OLIVE}>侧边栏 «</Func>
        </Push>
      </FunctionBar>

      <StatusBar>
        {MARKETS.map(([name, last, diff, pct, amount, c]) => (
          <Market key={name} $c={c}>
            <span>{name}</span><span>{last}</span><span>{diff}</span><span>{pct}</span><span>{amount}</span>
          </Market>
        ))}
        <StatusCell $w={130}><span>总成交</span><span>20762亿</span></StatusCell>
        <StatusCell $w={130}><span>&nbsp;北京双线主站2</span></StatusCell>
        <StatusSearch>
          <Search size={15} />
          <input aria-label="查找" />
        </StatusSearch>
        <StatusIcons>
          <svg width="76" height="18" viewBox="0 0 76 18">
            <rect x="1" y="1" width="14" height="16" rx="4" fill="#c8b820" />
            <path d="M8 4l4 4H9v5H7V8H4z" fill="#fff" />
            <path d="M25 2l10 1v8l-5-1-3 5h-2z" fill="#888" /><circle cx="34" cy="14" r="3" fill="#777" />
            <path d="M52 1l5 5h-10zM52 6l5 5h-10zM51 11h2v6h-2z" fill="#888" />
            <circle cx="69" cy="4" r="3" fill="#888" /><path d="M68 7h2v6h-2z" fill="#888" />
          </svg>
        </StatusIcons>
      </StatusBar>

      <Float>
        <FloatTitle>露笑科技<button aria-label="关闭浮窗"><X size={17} strokeWidth={1} /></button></FloatTitle>
        <FloatList>
          {FLOAT_ROWS.map(([k, v, c, mono]) => (
            <FloatRow key={k} $c={c} $mono={mono}><dt>{k}</dt><dd>{v}</dd></FloatRow>
          ))}
        </FloatList>
      </Float>
    </Dock>

    <Taskbar>
      <Weather><WeatherIcon /><span>10°C<br />阴</span></Weather>
      <Apps>
        <StartButton aria-label="开始">
          <svg width="30" height="30" viewBox="0 0 30 30">
            <defs>
              <linearGradient id="win" x1="0" x2="1" y1="0" y2="1">
                <stop offset="0" stopColor="#80e8ff" /><stop offset="1" stopColor="#0888e8" />
              </linearGradient>
            </defs>
            <path d="M0 0h14v14H0zM16 0h14v14H16zM0 16h14v14H0zM16 16h14v14H16z" fill="url(#win)" />
          </svg>
        </StartButton>
        <TaskSearch>
          <Search size={20} />
          <input aria-label="搜索" placeholder="搜索" />
          <svg width="50" height="32" viewBox="0 0 50 32" fill="none">
            <path d="M2 10q10 6 22-2M2 14q10 4 22-2" stroke="#9050d0" />
            <path d="M6 14V5M13 15V7M20 11V3" stroke="#50a0f0" strokeWidth="2" />
            <circle cx="5" cy="14" r="2" fill="#50a0f0" /><circle cx="12" cy="15" r="2" fill="#50a0f0" />
            <path d="M48 4q-7-3-8 3l-1 15q-1 7-5 6-5-1-3-9" stroke="#e0a030" strokeWidth="3" />
            <path d="M28 18h7M36 10l2 12" stroke="#f0c050" strokeWidth="2" />
          </svg>
        </TaskSearch>
        {APPS.map(([label, mark, art]) => (
          <AppButton key={label} aria-label={label} $mark={mark}>{art}</AppButton>
        ))}
      </Apps>
      <Tray>
        <button aria-label="隐藏的图标"><ChevronUp size={18} strokeWidth={3} /></button>
        <button aria-label="云同步"><CloudOff size={21} color="#aaa" /></button>
        <button aria-label="剪贴板"><ClipboardList size={19} /></button>
        <button aria-label="开关">
          <svg width="16" height="20" viewBox="0 0 16 20" fill="none" stroke="#fff" strokeWidth="2">
            <rect x="1" y="2" width="14" height="7" rx="3" /><rect x="1" y="11" width="14" height="7" rx="3" />
            <circle cx="11" cy="5" r="1" /><circle cx="5" cy="15" r="1" />
          </svg>
        </button>
        <button>中</button>
        <button aria-label="网络"><Wifi size={20} /></button>
        <button className="tight" aria-label="音量"><Volume2 size={20} /></button>
        <button className="tight" aria-label="电池"><BatteryCharging size={20} /></button>
        <TrayClock>22:43<br />2025/11/6</TrayClock>
      </Tray>
    </Taskbar>
  </Page>
);

export default App;
